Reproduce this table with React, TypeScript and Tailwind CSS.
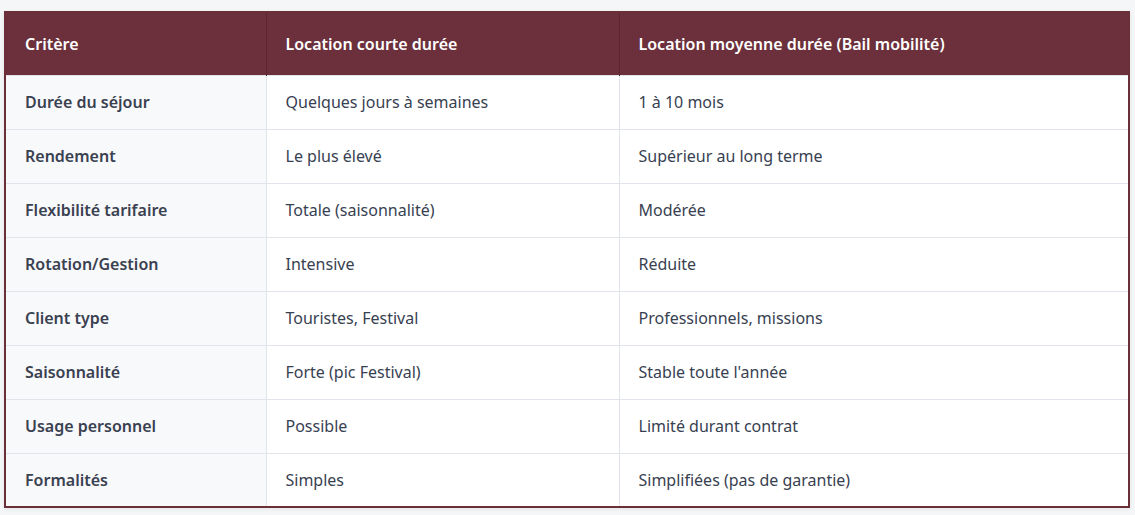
const rows = [
  ['Durée du séjour', 'Quelques jours à semaines', '1 à 10 mois'],
  ['Rendement', 'Le plus élevé', 'Supérieur au long terme'],
  ['Flexibilité tarifaire', 'Totale (saisonnalité)', 'Modérée'],
  ['Rotation/Gestion', 'Intensive', 'Réduite'],
  ['Client type', 'Touristes, Festival', 'Professionnels, missions'],
  ['Saisonnalité', 'Forte (pic Festival)', "Stable toute l'année"],
  ['Usage personnel', 'Possible', 'Limité durant contrat'],
  ['Formalités', 'Simples', 'Simplifiées (pas de garantie)'],
];

export default function App() {
  return (
    <div className="min-h-[515px] bg-[#f5f6f8] px-[4px] pt-[11px] font-['Noto_Sans',sans-serif]">
      <table className="w-[1126px] table-fixed border-collapse border-2 border-[#6b2f3a] text-[16px] shadow-[0_1px_4px_rgba(0,0,0,0.08)]">
        <colgroup>
          <col className="w-[261px]" />
          <col className="w-[353px]" />
          <col />
        </colgroup>
        <thead>
          <tr className="h-[63px] bg-[#6b303b] text-left text-white">
            <th className="border-r border-[#5c2631] pl-[19px] pr-5 font-semibold">Critère</th>
            <th className="border-r border-[#5c2631] pl-[19px] pr-5 font-semibold">Location courte durée</th>
            <th className="pl-[19px] pr-5 font-semibold">Location moyenne durée (Bail mobilité)</th>
          </tr>
        </thead>
        <tbody>
          {rows.map((r, i) => (
            <tr key={i} className="h-[54px] border-t border-[#e1e4ea] text-[#374151]">
              <td className="border-r border-[#e1e4ea] bg-[#f8f9fb] pl-[19px] pr-5 font-semibold text-[#3a4150]">{r[0]}</td>
              <td className="border-r border-[#e1e4ea] bg-white pl-[19px] pr-5">{r[1]}</td>
              <td className="bg-white pl-[19px] pr-5">{r[2]}</td>
            </tr>
          ))}
        </tbody>
      </table>
    </div>
  );
}
